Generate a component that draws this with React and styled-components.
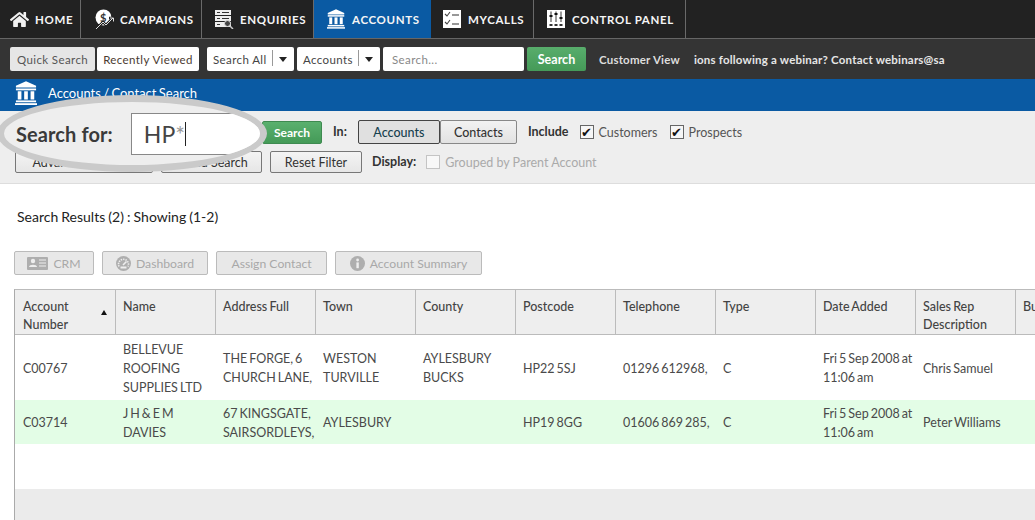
import React from "react";
import styled, { createGlobalStyle } from "styled-components";
import { FaHome } from "react-icons/fa";

const BankIcon = ({ size = 20, color = "#fff" }) => (
  <svg width={size} height={size * 1.1} viewBox="0 0 24 26" fill={color}>
    <path d="M12 0 L23 5 V7 H1 V5 Z" />
    <rect x="1" y="8" width="22" height="2" />
    <rect x="3" y="11" width="4" height="9" />
    <rect x="10" y="11" width="4" height="9" />
    <rect x="17" y="11" width="4" height="9" />
    <rect x="1" y="21" width="22" height="2" />
    <rect x="0" y="24" width="24" height="2" />
  </svg>
);

const CampaignIcon = () => (
  <svg width="20" height="21" viewBox="0 0 20 21">
    <circle cx="8.5" cy="8.5" r="8" fill="#fff" />
    <text x="8.5" y="12.5" textAnchor="middle" fontSize="11" fontWeight="700" fontFamily="Lato, sans-serif" fill="#333">$</text>
    <path d="M1 20 L8 13 L11 16 L18 9 M14 9 H18.5 V13" fill="none" stroke="#222" strokeWidth="2.5" />
    <path d="M1 20 L8 13 L11 16 L18 9 M15 9 H18.5 V12.5" fill="none" stroke="#ddd" strokeWidth="1" />
  </svg>
);

const EnquiryIcon = () => (
  <svg width="19" height="19" viewBox="0 0 19 19">
    <path d="M0 0H16V5H0ZM0 6H16V11H0ZM0 12H16V17H0Z" fill="#eee" />
    <path d="M2 2.5H5M7 2.5H14M2 8.5H5M7 8.5H14M2 14.5H5" stroke="#333" strokeWidth="1.2" />
    <circle cx="12.5" cy="13.5" r="3" fill="#444" stroke="#ddd" strokeWidth="1" />
    <path d="M15 16 L18 19" stroke="#ccc" strokeWidth="1.5" />
  </svg>
);

const CallsIcon = () => (
  <svg width="18" height="18" viewBox="0 0 18 18">
    <rect width="18" height="18" fill="#fff" />
    <path d="M2 4 L4 6 L7 2 M2 12 L4 14 L7 10" fill="none" stroke="#444" strokeWidth="1.1" />
    <path d="M9 5H16M9 14H16" stroke="#777" strokeWidth="1.5" />
  </svg>
);

const PanelIcon = () => (
  <svg width="18" height="18" viewBox="0 0 18 18">
    <rect width="18" height="18" fill="#fff" />
    <path d="M4 1.5V12M9 1.5V12M14 1.5V12" stroke="#333" strokeWidth="1" />
    <path d="M2.5 5H5.5V7H2.5ZM7.5 3H10.5V5H7.5ZM12.5 7H15.5V9H12.5Z" fill="#111" />
    <path d="M2.5 14H5.5V16H2.5ZM7.5 14H10.5V16H7.5ZM12.5 14H15.5V16H12.5Z" fill="#333" />
  </svg>
);

const CardIcon = () => (
  <svg width="21" height="15" viewBox="0 0 21 15">
    <rect width="21" height="13" y="1" rx="1" fill="#aeaeae" />
    <circle cx="6" cy="5" r="2.2" fill="#eee" />
    <path d="M2 11 C2 8 10 8 10 11Z" fill="#eee" />
    <path d="M12 4H19M12 7H19M12 10H19" stroke="#eee" strokeWidth="1.2" />
  </svg>
);

const GaugeIcon = () => (
  <svg width="15" height="15" viewBox="0 0 15 15">
    <circle cx="7.5" cy="7.5" r="7.5" fill="#aeaeae" />
    <path d="M3 10.5 A5 5 0 1 1 12 10.5" fill="none" stroke="#eee" strokeWidth="1.6" strokeDasharray="1.4 1" />
    <path d="M7 9 L10.5 5.5" stroke="#eee" strokeWidth="1.6" />
    <rect x="4.5" y="10.5" width="6" height="2" fill="#eee" />
  </svg>
);

const InfoIcon = () => (
  <svg width="15" height="15" viewBox="0 0 15 15">
    <circle cx="7.5" cy="7.5" r="7.5" fill="#aeaeae" />
    <rect x="6.4" y="6.4" width="2.4" height="5.8" fill="#eee" />
    <circle cx="7.6" cy="4" r="1.4" fill="#eee" />
  </svg>
);

const navItems = [
  { label: "HOME", icon: <FaHome size={19} color="#f2f2f2" />, width: 81, pad: 10, gap: 6 },
  { label: "CAMPAIGNS", icon: <CampaignIcon />, width: 121, pad: 14, gap: 5 },
  { label: "ENQUIRIES", icon: <EnquiryIcon />, width: 112, pad: 13, gap: 6 },
  { label: "ACCOUNTS", icon: <BankIcon size={18} />, width: 117, pad: 13, gap: 7, active: true },
  { label: "MYCALLS", icon: <CallsIcon />, width: 103, pad: 12, gap: 7 },
  { label: "CONTROL PANEL", icon: <PanelIcon />, width: 152, pad: 13, gap: 7 },
];

const columns = [
  "Account Number",
  "Name",
  "Address Full",
  "Town",
  "County",
  "Postcode",
  "Telephone",
  "Type",
  "Date Added",
  "Sales Rep Description",
  "Business",
];

const rows = [
  {
    id: "C00767",
    cells: ["C00767", "BELLEVUE ROOFING SUPPLIES LTD", "THE FORGE, 6 CHURCH LANE,", "WESTON TURVILLE", "AYLESBURY BUCKS", "HP22 5SJ", "01296 612968,", "C", "Fri 5 Sep 2008 at 11:06 am", "Chris Samuel", ""],
  },
  {
    id: "C03714",
    highlight: true,
    cells: ["C03714", "J H & E M DAVIES", "67 KINGSGATE, SAIRSORDLEYS,", "AYLESBURY", "", "HP19 8GG", "01606 869 285,", "C", "Fri 5 Sep 2008 at 11:06 am", "Peter Williams", ""],
  },
];

export default function App() {
  return (
    <Page>
      <GlobalStyle />
      <Nav>
        {navItems.map((item) => (
          <NavItem key={item.label} $width={item.width} $pad={item.pad} $gap={item.gap} $active={item.active}>
            {item.icon}
            <span>{item.label}</span>
          </NavItem>
        ))}
      </Nav>

      <Toolbar>
        <TabGroup>
          <ToolButton $width={85} $pressed>Quick Search</ToolButton>
          <ToolButton $width={102}>Recently Viewed</ToolButton>
        </TabGroup>
        <DropGroup>
          <Dropdown $width={87}>
            <span>Search All</span>
            <Caret />
          </Dropdown>
          <Dropdown $width={83}>
            <span>Accounts</span>
            <Caret />
          </Dropdown>
          <SearchBox>Search...</SearchBox>
          <GoButton>Search</GoButton>
        </DropGroup>
        <CustomerView>Customer View</CustomerView>
        <Ticker>ions following a webinar? Contact webinars@sa</Ticker>
      </Toolbar>

      <TitleBar>
        <BankIcon size={22} />
        <TitleText>Accounts / Contact Search</TitleText>
      </TitleBar>

      <FilterPanel>
        <FilterRow $indent={262} $gap={11}>
          <SubmitButton>Search</SubmitButton>
          <FilterLabel>In:</FilterLabel>
          <Segments>
            <Segment $width={82} $active>Accounts</Segment>
            <Segment $width={77}>Contacts</Segment>
          </Segments>
          <FilterLabel>Include</FilterLabel>
          <CheckLabel $checked>
            <CheckBox $checked>✔</CheckBox>
            Customers
          </CheckLabel>
          <CheckLabel $checked>
            <CheckBox $checked>✔</CheckBox>
            Prospects
          </CheckLabel>
        </FilterRow>
        <FilterRow $indent={15} $gap={8}>
          <FilterButton $width={138}>Advanced Search...</FilterButton>
          <FilterButton $width={101}>Saved Search</FilterButton>
          <FilterButton $width={92}>Reset Filter</FilterButton>
          <DisplayLabel>Display:</DisplayLabel>
          <CheckLabel>
            <CheckBox />
            Grouped by Parent Account
          </CheckLabel>
        </FilterRow>
      </FilterPanel>

      <Callout>
        <CalloutLabel>Search for:</CalloutLabel>
        <CalloutInput>
          HP<Star>*</Star>
          <TextCaret />
        </CalloutInput>
      </Callout>

      <Results>
        <ResultsTitle>Search Results (2) : Showing (1-2)</ResultsTitle>
        <Actions>
          <ActionButton $width={80}><CardIcon />CRM</ActionButton>
          <ActionButton $width={106}><GaugeIcon />Dashboard</ActionButton>
          <ActionButton $width={111}>Assign Contact</ActionButton>
          <ActionButton $width={147}><InfoIcon />Account Summary</ActionButton>
        </Actions>
      </Results>

      <TableFrame>
        <Table>
          <colgroup>
            {columns.map((c, i) => (
              <col key={c} style={{ width: i === 0 ? 101 : 100 }} />
            ))}
          </colgroup>
          <thead>
            <tr>
              {columns.map((c, i) => (
                <HeadCell key={c}>
                  {c}
                  {i === 0 && <SortArrow />}
                </HeadCell>
              ))}
            </tr>
          </thead>
          <tbody>
            {rows.map((r) => (
              <BodyRow key={r.id} $highlight={r.highlight}>
                {r.cells.map((v, i) => (
                  <BodyCell key={i} $first={i === 0}>{v}</BodyCell>
                ))}
              </BodyRow>
            ))}
            <SpacerRow>
              <td colSpan={columns.length} />
            </SpacerRow>
          </tbody>
        </Table>
        <TableFill />
      </TableFrame>
    </Page>
  );
}

const GlobalStyle = createGlobalStyle`
  html, body {
    margin: 0;
    padding: 0;
    background: #fff;
    overflow: hidden;
  }
  * {
    box-sizing: border-box;
  }
`;

const Page = styled.div`
  position: relative;
  width: 1035px;
  height: 520px;
  overflow: hidden;
  font-family: Lato, "Liberation Sans", sans-serif;
  background: #fff;
`;

const Nav = styled.div`
  display: flex;
  height: 39px;
  background: #222;
  border-bottom: 1px solid #666;
`;

const NavItem = styled.div`
  display: flex;
  align-items: center;
  flex: none;
  width: ${(p) => p.$width}px;
  padding-left: ${(p) => p.$pad}px;
  gap: ${(p) => p.$gap}px;
  background: ${(p) => (p.$active ? "#0a5aa3" : "transparent")};
  border-right: 1px solid ${(p) => (p.$active ? "#0a5aa3" : "#6a6a6a")};
  color: #f5f5f5;
  font-size: 11.5px;
  font-weight: 700;
  letter-spacing: 0.65px;
  white-space: nowrap;

  svg {
    flex: none;
  }
`;

const Toolbar = styled.div`
  display: flex;
  align-items: center;
  height: 40px;
  padding-left: 10px;
  background: #343434;
`;

const TabGroup = styled.div`
  display: flex;
  gap: 2px;
`;

const ToolButton = styled.div`
  width: ${(p) => p.$width}px;
  height: 24px;
  display: flex;
  align-items: center;
  justify-content: center;
  border-radius: 2px;
  background: ${(p) => (p.$pressed ? "#e6e6e6" : "#fff")};
  color: ${(p) => (p.$pressed ? "#555" : "#4a3a30")};
  font-size: 11.5px;
  letter-spacing: 0.4px;
`;

const DropGroup = styled.div`
  display: flex;
  gap: 3px;
  margin-left: 8px;
`;

const Dropdown = styled.div`
  width: ${(p) => p.$width}px;
  height: 24px;
  display: flex;
  align-items: center;
  justify-content: space-between;
  padding: 0 6px;
  border-radius: 2px;
  background: #fff;
  color: #444;
  font-size: 11.5px;
  letter-spacing: 0.4px;
`;

const Caret = styled.i`
  position: relative;
  display: block;
  width: 0;
  height: 0;
  margin: 0 1px 0 0;
  border-left: 4px solid transparent;
  border-right: 4px solid transparent;
  border-top: 5px solid #222;

  &::before {
    content: "";
    position: absolute;
    left: -11px;
    top: -12px;
    width: 1px;
    height: 16px;
    background: #999;
  }
`;

const SearchBox = styled.div`
  width: 141px;
  height: 24px;
  display: flex;
  align-items: center;
  padding-left: 9px;
  border-radius: 2px;
  background: #fff;
  color: #888;
  font-size: 11.5px;
  letter-spacing: 0.4px;
`;

const GoButton = styled.div`
  width: 59px;
  height: 24px;
  display: flex;
  align-items: center;
  justify-content: center;
  border-radius: 2px;
  background: linear-gradient(#58ad6c, #459a58);
  color: #fff;
  font-size: 12.5px;
  font-weight: 700;
`;

const CustomerView = styled.div`
  margin-left: 13px;
  color: #ddd;
  font-size: 11.5px;
  font-weight: 700;
  letter-spacing: 0.2px;
`;

const Ticker = styled.div`
  width: 251px;
  margin-left: 14px;
  overflow: hidden;
  white-space: nowrap;
  color: #e6e6e6;
  font-size: 11.5px;
  font-weight: 700;
  letter-spacing: 0.2px;
`;

const TitleBar = styled.div`
  display: flex;
  align-items: center;
  gap: 11px;
  height: 32px;
  padding: 0 0 3px 15px;
  background: #0a5aa3;
`;

const TitleText = styled.div`
  color: #fff;
  font-size: 13px;
  margin-top: -2px;
  word-spacing: -1px;
`;

const FilterPanel = styled.div`
  display: flex;
  flex-direction: column;
  gap: 7px;
  height: 73px;
  padding-top: 9px;
  background: #eee;
  border-bottom: 1px solid #ddd;
`;

const FilterRow = styled.div`
  display: flex;
  align-items: center;
  gap: ${(p) => p.$gap}px;
  padding-left: ${(p) => p.$indent}px;
`;

const SubmitButton = styled.div`
  width: 60px;
  height: 23px;
  display: flex;
  align-items: center;
  justify-content: center;
  border-radius: 2px;
  border: 1px solid #3e8a50;
  background: linear-gradient(#5ab06e, #449a57);
  color: #fff;
  font-size: 12px;
  font-weight: 700;
`;

const FilterLabel = styled.div`
  color: #333;
  font-size: 12.5px;
  font-weight: 700;
  margin-top: -2px;
`;

const Segments = styled.div`
  display: flex;
`;

const Segment = styled.div`
  width: ${(p) => p.$width}px;
  height: 24px;
  display: flex;
  align-items: center;
  justify-content: center;
  border: 1px solid ${(p) => (p.$active ? "#444" : "#888")};
  border-radius: 2px;
  background: ${(p) => (p.$active ? "#e0e0e0" : "linear-gradient(#f2f2f2, #e2e2e2)")};
  color: ${(p) => (p.$active ? "#17404f" : "#333")};
  font-size: 12.5px;
  font-weight: 500;
`;

const CheckLabel = styled.label`
  display: flex;
  align-items: center;
  gap: 5px;
  margin-right: 1px;
  color: ${(p) => (p.$checked ? "#555" : "#aaa")};
  font-size: 12.5px;
`;

const CheckBox = styled.span`
  width: 14px;
  height: 14px;
  display: flex;
  align-items: center;
  justify-content: center;
  border: 1px solid ${(p) => (p.$checked ? "#666" : "#c4c4c4")};
  background: ${(p) => (p.$checked ? "#f6f6f6" : "#f8f8f8")};
  color: #111;
  font-size: 13px;
  line-height: 1;
`;

const FilterButton = styled.div`
  width: ${(p) => p.$width}px;
  height: 22px;
  display: flex;
  align-items: center;
  justify-content: center;
  border: 1px solid #777;
  border-radius: 2px;
  background: linear-gradient(#f4f4f4, #e6e6e6);
  color: #333;
  font-size: 12.5px;
`;

const DisplayLabel = styled(FilterLabel)`
  margin: -2px 2px 0 2px;
`;

const Callout = styled.div`
  position: absolute;
  left: -3px;
  top: 95px;
  width: 270px;
  height: 77px;
  display: flex;
  align-items: center;
  gap: 18px;
  padding: 0 0 0 12px;
  overflow: hidden;
  border: 7px solid #cacaca;
  border-radius: 50%;
  background: #eee;
`;

const CalloutLabel = styled.div`
  color: #3a3a3a;
  font-size: 20px;
  font-weight: 700;
  letter-spacing: 0.1px;
  white-space: nowrap;
`;

const CalloutInput = styled.div`
  display: flex;
  align-items: center;
  flex: none;
  width: 150px;
  height: 42px;
  padding-left: 12px;
  background: #fff;
  border: 1px solid #888;
  border-right: none;
  color: #444;
  font-size: 23px;
`;

const Star = styled.span`
  color: #999;
`;

const TextCaret = styled.i`
  display: block;
  width: 1px;
  height: 24px;
  background: #222;
`;

const Results = styled.div`
  display: flex;
  flex-direction: column;
  padding: 24px 14px 0;
`;

const ResultsTitle = styled.div`
  height: 18px;
  padding-left: 3px;
  color: #222;
  font-size: 14px;
  line-height: 18px;
  word-spacing: -0.5px;
`;

const Actions = styled.div`
  display: flex;
  gap: 8px;
  margin-top: 25px;
`;

const ActionButton = styled.div`
  width: ${(p) => p.$width}px;
  height: 24px;
  display: flex;
  align-items: center;
  justify-content: center;
  gap: 5px;
  border: 1px solid #bbb;
  border-radius: 2px;
  background: #e8e8e8;
  color: #a8a8a8;
  font-size: 12.2px;
`;

const TableFrame = styled.div`
  margin: 14px 0 0 14px;
  border-left: 1px solid #aaa;
  border-top: 1px solid #bbb;
  width: 1300px;
`;

const Table = styled.table`
  table-layout: fixed;
  width: 1101px;
  border-collapse: separate;
  border-spacing: 0;
`;

const HeadCell = styled.th`
  position: relative;
  height: 45px;
  padding: 8px 12px 0 7px;
  vertical-align: top;
  text-align: left;
  background: #eee;
  border-right: 1px solid #bbb;
  border-bottom: 1px solid #bbb;
  color: #444;
  font-size: 12.5px;
  font-weight: 500;
  line-height: 18px;
  white-space: normal;
  word-spacing: -1px;

  &:first-child {
    padding-left: 8px;
    padding-right: 30px;
  }
`;

const SortArrow = styled.i`
  position: absolute;
  right: 8px;
  top: 20px;
  width: 0;
  height: 0;
  border-left: 3px solid transparent;
  border-right: 3px solid transparent;
  border-top: none;
  border-bottom: 5px solid #111;
`;

const BodyRow = styled.tr`
  background: ${(p) => (p.$highlight ? "#e3fde6" : "#fff")};
  height: ${(p) => (p.$highlight ? 44 : 65)}px;
`;

const BodyCell = styled.td`
  padding: 1px 3px 0 ${(p) => (p.$first ? 8 : 7)}px;
  vertical-align: middle;
  color: #4a4a4a;
  font-size: 12.5px;
  line-height: 19px;
  word-spacing: -1.2px;
`;

const SpacerRow = styled.tr`
  height: 45px;
  background: #fff;
`;

const TableFill = styled.div`
  height: 60px;
  background: #ebebeb;
`;
